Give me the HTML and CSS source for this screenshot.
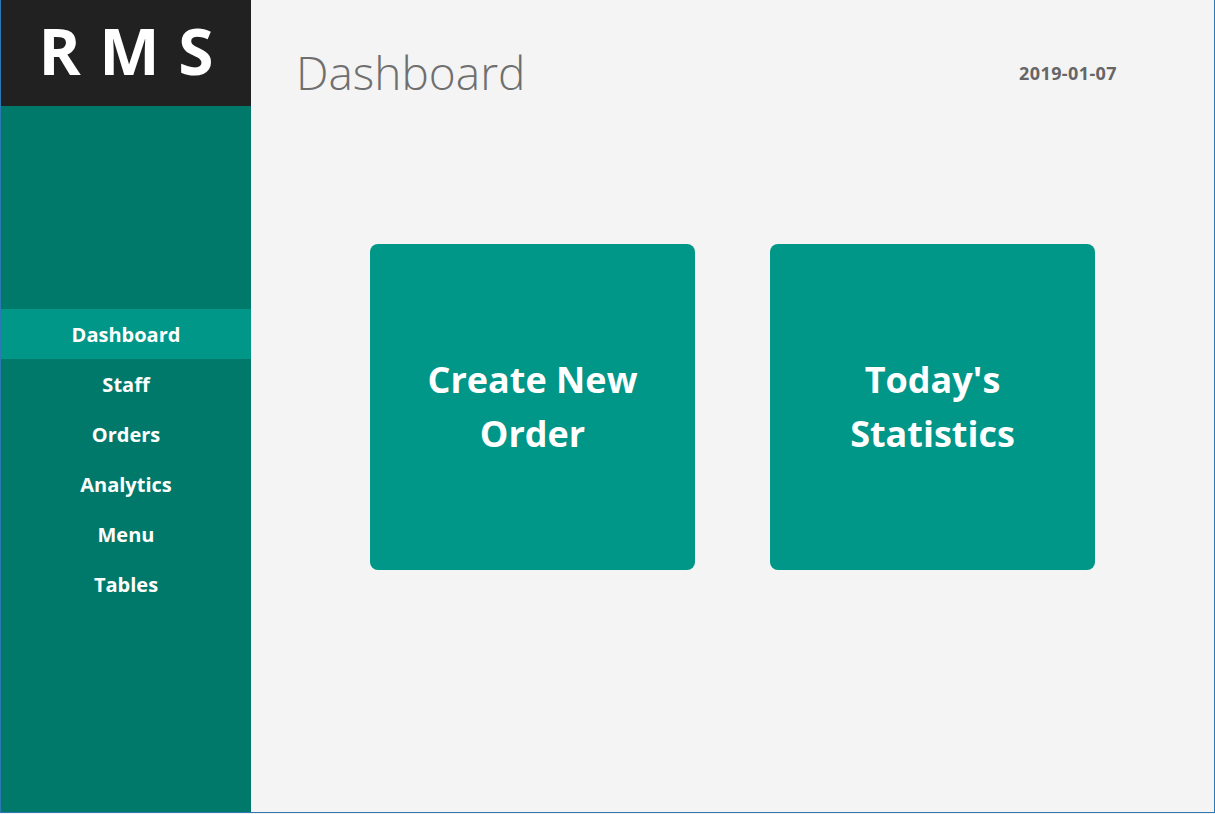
FILE: index.html
```html
<!DOCTYPE html>
<html>
<head>
<meta charset="utf-8">
<link rel="stylesheet" href="styles.css">
</head>
<body>
<div class="app">
  <aside class="sidebar">
    <div class="brand">R M S</div>
    <nav class="nav">
      <a class="nav-item active">Dashboard</a>
      <a class="nav-item">Staff</a>
      <a class="nav-item">Orders</a>
      <a class="nav-item">Analytics</a>
      <a class="nav-item">Menu</a>
      <a class="nav-item">Tables</a>
    </nav>
  </aside>
  <main class="main">
    <header class="header">
      <h1 class="title">Dashboard</h1>
      <div class="date">2019-01-07</div>
    </header>
    <section class="cards">
      <div class="card">Create New<br>Order</div>
      <div class="card">Today's<br>Statistics</div>
    </section>
  </main>
</div>
</body>
</html>
```
FILE: styles.css
```css
html, body {
  margin: 0;
  padding: 0;
  width: 1215px;
  height: 814px;
  overflow: hidden;
  background: #f4f4f4;
  font-family: "Open Sans", "Noto Sans", sans-serif;
}
.app {
  display: flex;
  width: 1215px;
  height: 813px;
  border-left: 1px solid #2b78b5;
  border-right: 1px solid #2b78b5;
  border-bottom: 1px solid #2b78b5;
  box-sizing: border-box;
}
.sidebar {
  width: 250px;
  flex: none;
  background: #00796b;
  display: flex;
  flex-direction: column;
}
.brand {
  height: 106px;
  background: #212121;
  color: #fff;
  font-weight: 700;
  font-size: 64px;
  display: flex;
  align-items: center;
  justify-content: center;
  word-spacing: 2px;
  padding-bottom: 6px;
  box-sizing: border-box;
}
.nav {
  display: flex;
  flex-direction: column;
  margin-top: 203px;
}
.nav-item {
  height: 50px;
  display: flex;
  align-items: center;
  justify-content: center;
  color: #fff;
  font-weight: 700;
  font-size: 20px;
  text-decoration: none;
}
.nav-item.active {
  background: #009688;
}
.main {
  flex: 1;
  display: flex;
  flex-direction: column;
}
.header {
  display: flex;
  align-items: center;
  justify-content: space-between;
  padding: 42px 97px 0 45px;
  height: 60px;
}
.title {
  margin: 0;
  font-weight: 300;
  font-size: 46px;
  color: #6f6f6f;
  line-height: 60px;
}
.date {
  font-weight: 700;
  font-size: 18px;
  letter-spacing: 0.4px;
  color: #666;
  padding-top: 2px;
}
.cards {
  display: flex;
  gap: 75px;
  margin-top: 142px;
  padding-left: 119px;
}
.card {
  width: 325px;
  height: 326px;
  border-radius: 8px;
  background: #009688;
  color: #fff;
  font-weight: 700;
  font-size: 36px;
  line-height: 54px;
  display: flex;
  align-items: center;
  justify-content: center;
  text-align: center;
}
```
